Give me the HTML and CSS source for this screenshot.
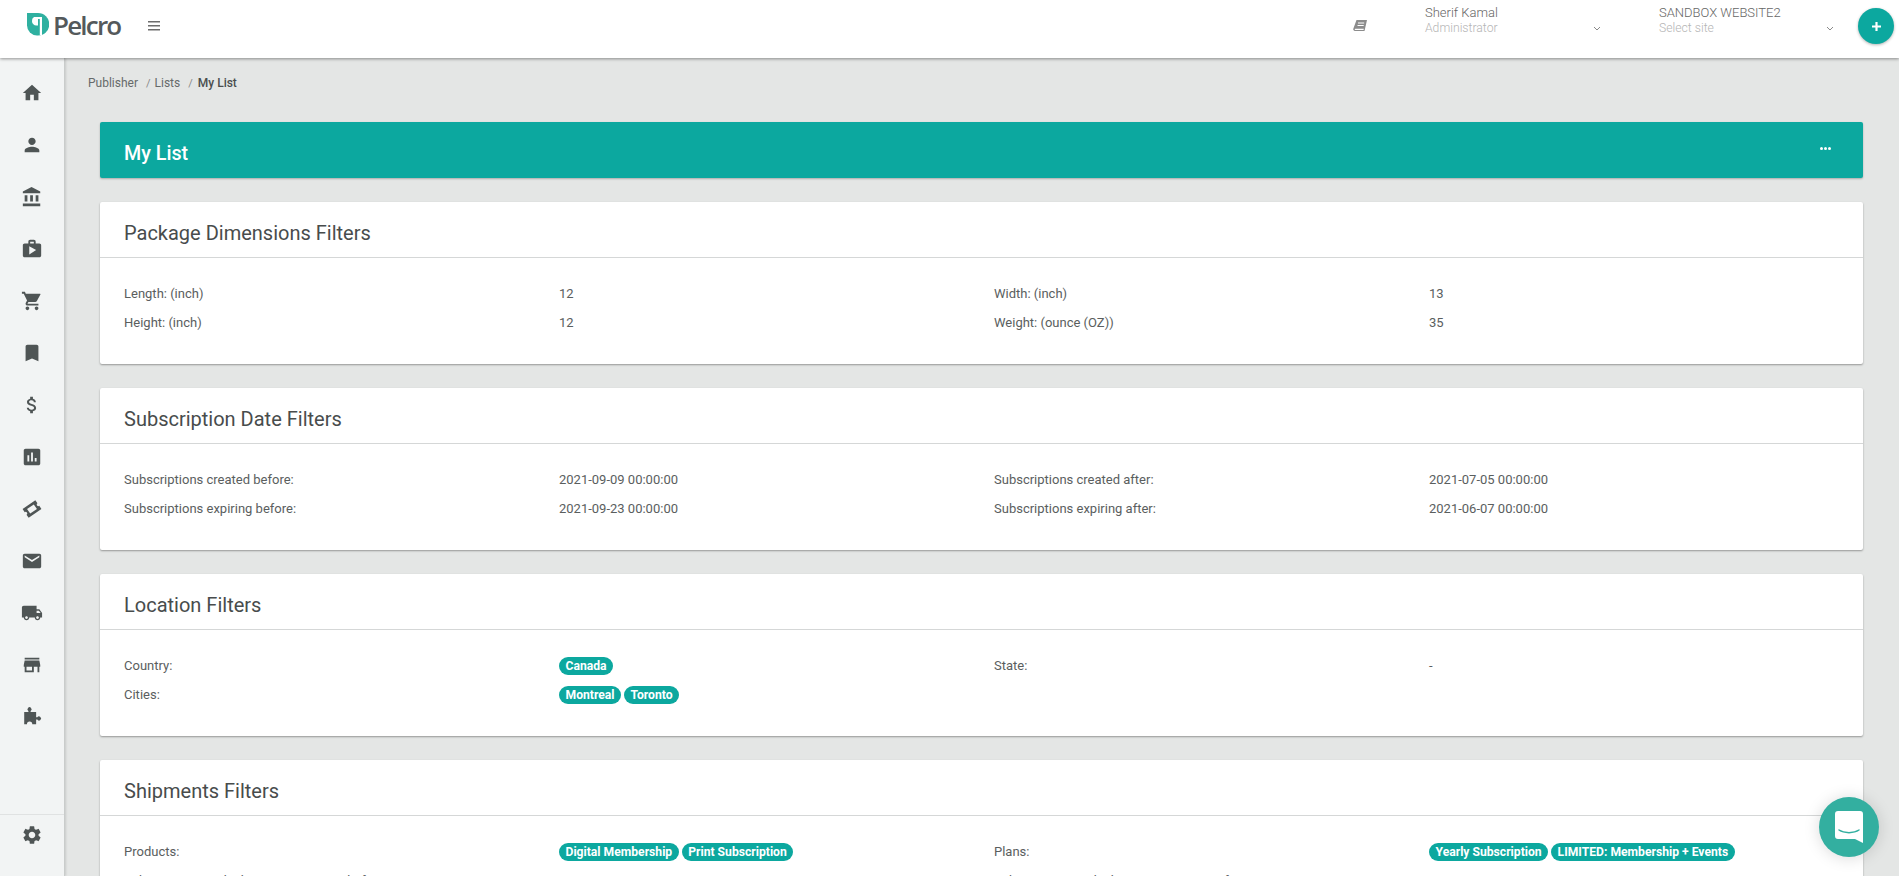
FILE: index.html
```html
<!DOCTYPE html>
<html lang="en">
<head>
<meta charset="utf-8">
<title>My List</title>
<link rel="stylesheet" href="styles.css">
</head>
<body>
<header class="topbar">
  <div class="brand">
    <svg class="logo-mark" viewBox="0 0 22 23"><path fill="#2fb0a0" d="M0 0h11a11 11 0 0 1 0 22.500h-1A10 10 0 0 1 0 12.500z"/><path fill="#fff" d="M7 4h8v18h-2.200V6H11v6.500H9.500A4.300 4.300 0 0 1 5 8.200 4.200 4.200 0 0 1 7 4z"/></svg>
    <span class="logo-text">Pelcro</span>
  </div>
  <svg class="menu-icon" viewBox="0 0 12 10"><path fill="#6d6d6d" d="M0 0h12v1.600H0zM0 4h12v1.600H0zM0 8h12v1.600H0z"/></svg>
  <div class="top-right">
    <svg class="book-icon" viewBox="0 0 14 12"><path fill="#8c8c8c" d="M3.500 0H14l-2.500 11H2a1.700 1.700 0 0 1-1.700-2.200L3.500 0zM5 2.500v1h6.200v-1zM4.500 5v1h6.200V5zM2.200 10h8.300l.3-1.200H2.500a.6.6 0 0 0-.3 1.200z"/></svg>
    <div class="select user-select">
      <div class="select-text"><span class="select-title">Sherif Kamal</span><span class="select-sub">Administrator</span></div>
      <svg class="chevron" viewBox="0 0 8 5"><path fill="none" stroke="#8a8a8a" d="M1 1l3 3 3-3"/></svg>
    </div>
    <div class="select site-select">
      <div class="select-text"><span class="select-title">SANDBOX WEBSITE2</span><span class="select-sub">Select site</span></div>
      <svg class="chevron" viewBox="0 0 8 5"><path fill="none" stroke="#8a8a8a" d="M1 1l3 3 3-3"/></svg>
    </div>
    <div class="add-btn"><svg viewBox="0 0 10 10"><path fill="#fff" d="M3.800 0h2.400v3.800H10v2.400H6.200V10H3.800V6.200H0V3.800h3.800z"/></svg></div>
  </div>
</header>

<div class="shell">
  <nav class="sidebar">
    <div class="nav-list">
      <svg class="nav-icon" viewBox="0 0 24 24"><path d="M10 20v-6h4v6h5v-8h3L12 3 2 12h3v8z"/></svg>
      <svg class="nav-icon" viewBox="0 0 24 24"><path d="M12 12c2.210 0 4-1.790 4-4s-1.790-4-4-4-4 1.790-4 4 1.790 4 4 4zm0 2c-2.670 0-8 1.340-8 4v2h16v-2c0-2.660-5.330-4-8-4z"/></svg>
      <svg class="nav-icon" viewBox="0 0 24 24"><path d="M4 10v7h3v-7H4zm6 0v7h3v-7h-3zM2 22h19v-3H2v3zm14-12v7h3v-7h-3zm-4.500-9L2 6v2h19V6l-9.500-5z"/></svg>
      <svg class="nav-icon" viewBox="0 0 24 24"><path d="M20 6h-4V4c0-1.110-.89-2-2-2h-4c-1.110 0-2 .89-2 2v2H4c-1.110 0-2 .89-2 2v11c0 1.110.89 2 2 2h16c1.110 0 2-.89 2-2V8c0-1.110-.89-2-2-2zM10 4h4v2h-4V4zM9 18V9l7.500 4L9 18z"/></svg>
      <svg class="nav-icon" viewBox="0 0 24 24"><path d="M7 18c-1.100 0-1.990.9-1.990 2S5.900 22 7 22s2-.9 2-2-.9-2-2-2zM1 2v2h2l3.600 7.590-1.350 2.450c-.16.28-.25.61-.25.96 0 1.100.9 2 2 2h12v-2H7.420c-.14 0-.25-.11-.25-.25l.03-.12.9-1.630h7.450c.75 0 1.410-.41 1.750-1.030l3.580-6.490A1 1 0 0 0 20.950 4H5.210l-.94-2H1zm16 16c-1.100 0-1.990.9-1.990 2s.89 2 1.990 2 2-.9 2-2-.9-2-2-2z"/></svg>
      <svg class="nav-icon" viewBox="0 0 24 24"><path d="M17 3H7c-1.100 0-2 .9-2 2v16l7-3 7 3V5c0-1.100-.9-2-2-2z"/></svg>
      <svg class="nav-icon" viewBox="0 0 24 24"><path d="M11.800 10.900c-2.270-.59-3-1.200-3-2.150 0-1.090 1.010-1.850 2.700-1.850 1.780 0 2.440.85 2.500 2.100h2.210c-.07-1.720-1.120-3.300-3.210-3.810V3h-3v2.160c-1.940.42-3.500 1.680-3.500 3.610 0 2.310 1.910 3.460 4.700 4.130 2.500.6 3 1.480 3 2.410 0 .69-.49 1.790-2.700 1.790-2.060 0-2.870-.92-2.980-2.100h-2.200c.12 2.190 1.760 3.420 3.680 3.830V21h3v-2.150c1.950-.37 3.500-1.500 3.500-3.550 0-2.840-2.430-3.810-4.700-4.400z"/></svg>
      <svg class="nav-icon" viewBox="0 0 24 24"><path d="M19 3H5c-1.100 0-2 .9-2 2v14c0 1.100.9 2 2 2h14c1.100 0 2-.9 2-2V5c0-1.100-.9-2-2-2zM9 17H7v-7h2v7zm4 0h-2V7h2v10zm4 0h-2v-4h2v4z"/></svg>
      <svg class="nav-icon" viewBox="0 0 24 24"><path transform="rotate(-35 12 12)" fill-rule="evenodd" d="M3.500 6.200h17v4.100a1.700 1.700 0 0 0 0 3.400v4.100h-17v-4.100a1.700 1.700 0 0 0 0-3.400zM7.500 9v6h9V9z"/></svg>
      <svg class="nav-icon" viewBox="0 0 24 24"><path d="M20 4H4c-1.100 0-1.990.9-1.990 2L2 18c0 1.100.9 2 2 2h16c1.100 0 2-.9 2-2V6c0-1.100-.9-2-2-2zm0 4l-8 5-8-5V6l8 5 8-5v2z"/></svg>
      <svg class="nav-icon" viewBox="0 0 24 24"><path d="M20 8h-3V4H3c-1.100 0-2 .9-2 2v11h2c0 1.660 1.340 3 3 3s3-1.340 3-3h6c0 1.660 1.340 3 3 3s3-1.340 3-3h2v-5l-3-4zM6 18.500c-.83 0-1.500-.67-1.500-1.500s.67-1.500 1.500-1.500 1.500.67 1.500 1.500-.67 1.500-1.500 1.500zm13.500-9l1.960 2.500H17V9.500h2.500zm-1.500 9c-.83 0-1.500-.67-1.500-1.500s.67-1.500 1.500-1.500 1.500.67 1.500 1.500-.67 1.500-1.500 1.500z"/></svg>
      <svg class="nav-icon" viewBox="0 0 24 24"><path d="M20 4H4v2h16V4zm1 10v-2l-1-5H4l-1 5v2h1v6h10v-6h4v6h2v-6h1zm-9 4H6v-4h6v4z"/></svg>
      <svg class="nav-icon" viewBox="0 0 24 24"><path d="M3.500 6.500h4.600V5.400a2.200 2.200 0 1 1 2.400 0v1.100h6v5.900h1.300a2.200 2.200 0 1 1 0 2.400h-1.300v5.100h-4.200a2.900 2.900 0 0 0-5.800 0H3.500z"/></svg>
    </div>
    <div class="nav-foot">
      <svg class="nav-icon" viewBox="0 0 24 24"><path d="M19.140 12.940c.04-.3.060-.61.060-.94 0-.32-.02-.64-.07-.94l2.030-1.580a.49.49 0 0 0 .12-.61l-1.920-3.320a.488.488 0 0 0-.59-.22l-2.390.96c-.5-.38-1.030-.7-1.620-.94l-.36-2.540a.484.484 0 0 0-.48-.41h-3.840c-.24 0-.43.170-.47.410l-.36 2.540c-.59.24-1.130.57-1.620.94l-2.390-.96c-.22-.08-.47 0-.59.22L2.740 8.870c-.12.210-.08.470.12.610l2.030 1.580c-.05.3-.09.630-.09.940s.02.640.07.940l-2.030 1.580a.49.49 0 0 0-.12.610l1.920 3.320c.12.220.37.290.59.220l2.390-.96c.5.380 1.030.7 1.620.94l.36 2.540c.05.240.24.410.48.410h3.840c.24 0 .44-.17.47-.41l.36-2.540c.59-.24 1.130-.56 1.620-.94l2.390.96c.22.080.47 0 .59-.22l1.920-3.320c.12-.22.070-.47-.12-.61l-2.010-1.580zM12 15.600c-1.980 0-3.600-1.620-3.600-3.600s1.620-3.600 3.600-3.600 3.600 1.620 3.600 3.600-1.620 3.600-3.600 3.600z"/></svg>
    </div>
  </nav>

  <main class="content">
    <div class="crumbs">
      <span>Publisher</span><i>/</i><span>Lists</span><i>/</i><b>My List</b>
    </div>

    <div class="page-head">
      <h1>My List</h1>
      <span class="dots"><em></em><em></em><em></em></span>
    </div>

    <section class="card">
      <h2>Package Dimensions Filters</h2>
      <div class="rows">
        <span>Length: (inch)</span><span>12</span><span>Width: (inch)</span><span>13</span>
        <span>Height: (inch)</span><span>12</span><span>Weight: (ounce (OZ))</span><span>35</span>
      </div>
    </section>

    <section class="card">
      <h2>Subscription Date Filters</h2>
      <div class="rows">
        <span>Subscriptions created before:</span><span>2021-09-09 00:00:00</span><span>Subscriptions created after:</span><span>2021-07-05 00:00:00</span>
        <span>Subscriptions expiring before:</span><span>2021-09-23 00:00:00</span><span>Subscriptions expiring after:</span><span>2021-06-07 00:00:00</span>
      </div>
    </section>

    <section class="card">
      <h2>Location Filters</h2>
      <div class="rows">
        <span>Country:</span><span class="tags"><a>Canada</a></span><span>State:</span><span>-</span>
        <span>Cities:</span><span class="tags"><a>Montreal</a><a>Toronto</a></span><span></span><span></span>
      </div>
    </section>

    <section class="card">
      <h2>Shipments Filters</h2>
      <div class="rows">
        <span>Products:</span><span class="tags"><a>Digital Membership</a><a>Print Subscription</a></span><span>Plans:</span><span class="tags"><a>Yearly Subscription</a><a>LIMITED: Membership + Events</a></span>
        <span>Subscriptions with shipments expiring before:</span><span></span><span>Subscriptions with shipments expiring after:</span><span></span>
      </div>
    </section>
  </main>
</div>

<div class="chat">
  <svg viewBox="0 0 28 32"><path fill="#fff" d="M3 0h22a3 3 0 0 1 3 3v29l-8-4H3a3 3 0 0 1-3-3V3a3 3 0 0 1 3-3z"/><path fill="none" stroke="#33afa0" stroke-width="1.500" stroke-linecap="round" d="M4 19c5 3.500 15 3.500 20 0"/></svg>
</div>
</body>
</html>
```
FILE: styles.css
```css
* { box-sizing: border-box; }
html, body { margin: 0; height: 100%; overflow: hidden; }
body {
  font-family: Roboto, "Liberation Sans", sans-serif;
  background: #e4e6e5;
  color: #4f5353;
  font-size: 13px;
}
.topbar {
  position: relative;
  z-index: 3;
  height: 58px;
  background: #fff;
  box-shadow: 0 1px 3px rgba(0,0,0,.4);
  display: flex;
  align-items: center;
  padding-left: 27px;
}
.brand { display: flex; align-items: center; width: 121px; height: 100%; padding-bottom: 9px; }
.logo-mark { width: 22px; height: 23px; margin-right: 4px; }
.logo-text {
  font-family: "Open Sans", sans-serif;
  font-size: 26px;
  font-weight: 600;
  letter-spacing: -1.800px;
  color: #54595b;
  line-height: 24px;
}
.menu-icon { width: 12px; height: 10px; margin-bottom: 6px; }
.top-right { margin-left: auto; display: flex; align-items: center; height: 100%; }
.book-icon { width: 14px; height: 12px; margin-right: 58px; margin-bottom: 6px; }
.select { display: flex; height: 100%; position: relative; }
.user-select { width: 234px; }
.site-select { width: 199px; }
.select-text { display: flex; flex-direction: column; padding-top: 6px; }
.select-title { font-size: 13px; font-weight: 300; color: #666; line-height: 14.500px; }
.select-sub { font-size: 12.200px; font-weight: 300; color: #b5b5b5; line-height: 14.500px; }
.chevron { position: absolute; width: 8px; height: 5px; top: 26px; }
.user-select .chevron { right: 58px; }
.site-select .chevron { right: 24px; }
.add-btn {
  width: 36px; height: 36px; margin-right: 5px; margin-bottom: 6px;
  border-radius: 50%;
  background: #0ca89f;
  box-shadow: 0 1px 3px rgba(0,0,0,.3);
  display: flex; align-items: center; justify-content: center;
}
.add-btn svg { width: 9px; height: 9px; }
.shell { display: flex; height: calc(100% - 58px); }
.sidebar {
  width: 65px;
  flex: none;
  background: #f2f4f4;
  border-right: 1px solid #c9cccb;
  box-shadow: 1px 0 2px rgba(0,0,0,.12);
  display: flex;
  flex-direction: column;
  justify-content: space-between;
}
.nav-list { display: flex; flex-direction: column; align-items: center; padding: 24px 1px 0 0; gap: 30px; }
.nav-icon { width: 22px; height: 22px; fill: #4f5555; flex: none; }
.nav-foot {
  height: 62px;
  border-top: 1px solid #e0e2e2;
  display: flex;
  justify-content: center;
  padding: 9px 1px 0 0;
}
.content { flex: 1; min-width: 0; padding: 17px 36px 0 35px; }
.crumbs { display: flex; align-items: center; font-size: 12px; color: #666a6a; height: 16px; margin-left: -12px; }
.crumbs i { margin: 0 4px 0 8px; font-style: normal; font-size: 11px; color: #888; }
.crumbs b { font-weight: 500; color: #4a4e4e; margin-left: 1px; }
.page-head {
  margin-top: 31px;
  height: 56px;
  background: #0ca89f;
  border-radius: 2px;
  box-shadow: 0 1px 2px rgba(0,0,0,.25);
  display: flex;
  align-items: center;
  justify-content: space-between;
  padding: 7px 32px 0 24px;
  color: #fff;
}
.page-head h1 { margin: 0; font-size: 19.700px; font-weight: 500; line-height: 1; }
.dots { display: flex; gap: 1px; margin-bottom: 11px; }
.dots em { width: 3px; height: 3px; background: #fff; border-radius: 50%; }
.card {
  margin-top: 24px;
  height: 162px;
  background: #fff;
  border-radius: 2px;
  box-shadow: 0 1px 2px rgba(0,0,0,.35);
}
.card h2 {
  margin: 0;
  height: 56px;
  padding: 6px 24px 0;
  display: flex;
  align-items: center;
  font-size: 20px;
  font-weight: 400;
  color: #484c4c;
  border-bottom: 1px solid #d5d7d7;
}
.rows {
  display: grid;
  grid-template-columns: 435px 435px 435px 1fr;
  grid-auto-rows: 29px;
  padding: 21px 24px 0;
  align-items: center;
  font-size: 13px;
  font-weight: 400;
  color: #5a5e5e;
}
.tags { display: flex; gap: 3px; }
.tags a {
  background: #0ca89f;
  color: #fff;
  font-weight: 700;
  font-size: 12.150px;
  line-height: 18px;
  padding: 0 6.500px;
  border-radius: 9px;
}
.chat {
  position: fixed;
  right: 20px;
  bottom: 19px;
  width: 60px;
  height: 60px;
  border-radius: 50%;
  background: #33afa0;
  box-shadow: 0 1px 16px rgba(0,0,0,.15);
  display: flex;
  align-items: center;
  justify-content: center;
}
.chat svg { width: 28px; height: 32px; }
```
